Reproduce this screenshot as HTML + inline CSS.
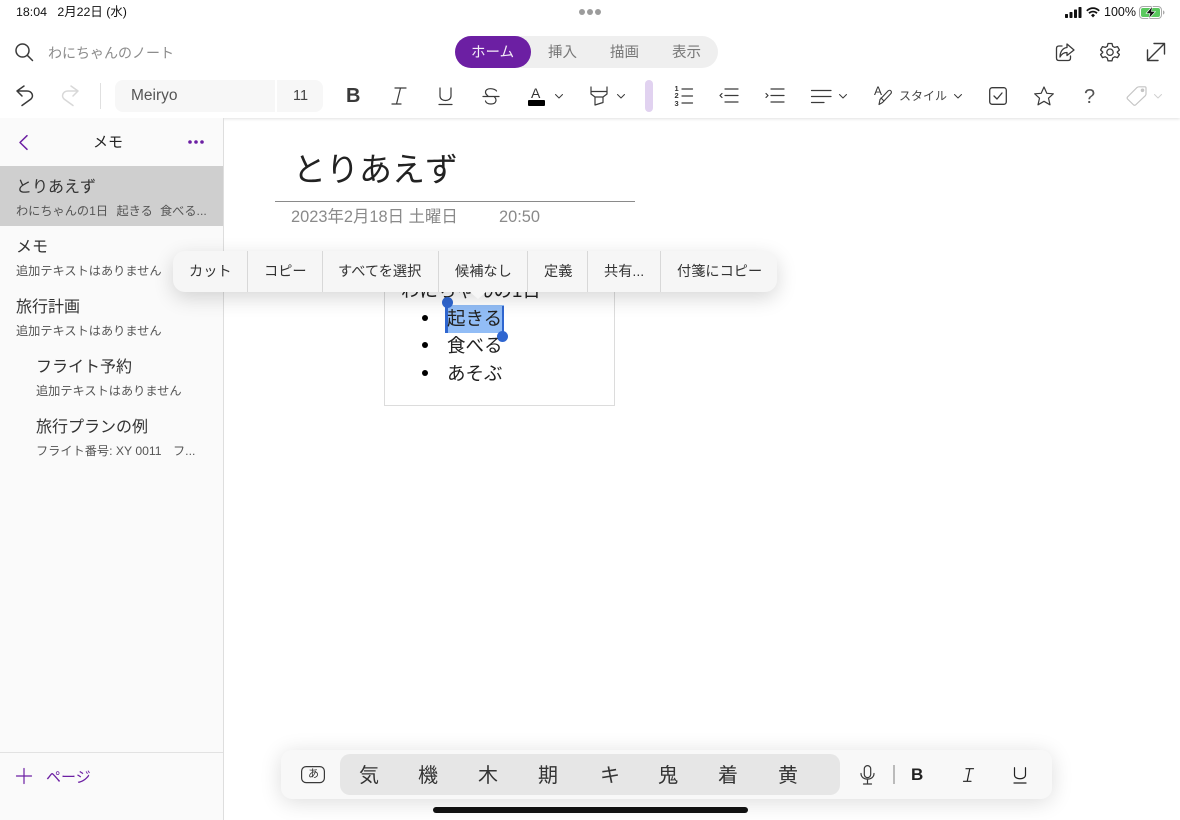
<!DOCTYPE html>
<html lang="ja"><head><meta charset="utf-8"><style>
*{box-sizing:border-box;margin:0;padding:0}
html,body{width:1180px;height:820px;overflow:hidden;background:#fff;font-family:"Liberation Sans","Noto Sans CJK JP",sans-serif;color:#222}
body{fill:none;stroke:#3a3a3a;stroke-width:1.5;stroke-linecap:round;stroke-linejoin:round}
.t{position:absolute;white-space:nowrap;line-height:1}
svg{position:absolute;overflow:visible}
#top{position:absolute;left:0;top:0;width:1180px;height:118px;background:#fff;box-shadow:0 1px 3px rgba(0,0,0,.12)}
#side{position:absolute;left:0;top:118px;width:224px;height:702px;background:#fafafa;border-right:1px solid #dedede}
.sel{position:absolute;left:0;top:48px;width:223px;height:60px;background:#cfcfcf}
.h{font-size:16px;color:#333}.s{font-size:12.2px;color:#555}
#menu{position:absolute;left:173px;top:251px;width:604px;height:41px;background:#f6f6f6;border-radius:12px;box-shadow:0 6px 20px rgba(0,0,0,.16);z-index:5}
#menu i{position:absolute;top:0;width:1px;height:41px;background:#d8d8d8}
#menu span{position:absolute;top:14px;font-size:14.2px;line-height:1;color:#333;white-space:nowrap}
#kb{position:absolute;left:281px;top:750px;width:771px;height:49px;background:#f8f8f8;border-radius:11px;box-shadow:0 3px 22px rgba(0,0,0,.14)}
#cand{position:absolute;left:59px;top:4px;width:500px;height:41px;background:#e6e6e6;border-radius:10px}
#kb .c{position:absolute;top:16px;font-size:20px;line-height:1;color:#333}
</style></head><body>
<div id="top"></div>
<div class="t" style="left:16px;top:6px;font-size:12.4px;color:#111">18:04&nbsp;&nbsp; 2月22日 (水)</div>
<div style="position:absolute;left:579px;top:9px;width:6px;height:6px;border-radius:3px;background:#9c9c9c"></div>
<div style="position:absolute;left:587px;top:9px;width:6px;height:6px;border-radius:3px;background:#9c9c9c"></div>
<div style="position:absolute;left:595px;top:9px;width:6px;height:6px;border-radius:3px;background:#9c9c9c"></div>
<svg style="left:1065px;top:7px" width="17" height="11"><g fill="#111" stroke="none"><rect x="0" y="7" width="3" height="4" rx=".7"/><rect x="4.500" y="5" width="3" height="6" rx=".7"/><rect x="9" y="2.500" width="3" height="8.500" rx=".7"/><rect x="13.500" y="0" width="3" height="11" rx=".7"/></g></svg>
<svg style="left:1086px;top:7px" width="14" height="11"><path d="M.8 3.800C4.500.2 9.500.2 13.200 3.800M3 6.200C5.300 4 8.700 4 11 6.200" stroke="#111" stroke-width="1.700" stroke-linecap="butt"/><path d="M5 8.300 7 6.800 9 8.300 7 10.500Z" fill="#111" stroke="none"/></svg>
<div class="t" style="left:1104px;top:6px;font-size:12.500px;color:#111">100%</div>
<svg style="left:1139px;top:6px" width="26" height="13"><rect x=".5" y=".5" width="22" height="12" rx="3.500" stroke="#aaa" stroke-width="1"/><rect x="2" y="2" width="19" height="9" rx="2" fill="#5ac85e" stroke="none"/><path d="M24 4.500v4c1-.3 1.500-1 1.500-2s-.5-1.700-1.500-2Z" fill="#aaa" stroke="none"/><path d="M13.500 0 7 7.500h4L9.500 13 16.500 5.500h-4L13.500 0Z" fill="#111" stroke="#fff" stroke-width=".6"/></svg>

<svg style="left:15px;top:43px" width="18" height="18" stroke-width="1.500"><circle cx="7.500" cy="7.500" r="6.500"/><path d="M12.300 12.300 17.500 17.500"/></svg>
<div class="t" style="left:48px;top:46px;font-size:14px;color:#8c8c8c">わにちゃんのノート</div>

<div style="position:absolute;left:455px;top:36px;width:263px;height:32px;border-radius:16px;background:#efefef"></div>
<div style="position:absolute;left:455px;top:36px;width:76px;height:32px;border-radius:16px;background:#6c1fa3"></div>
<div class="t" style="left:471px;top:46px;font-size:14.500px;color:#f4ecf8">ホーム</div>
<div class="t" style="left:548px;top:46px;font-size:14.500px;color:#777">挿入</div>
<div class="t" style="left:610px;top:46px;font-size:14.500px;color:#777">描画</div>
<div class="t" style="left:672px;top:46px;font-size:14.500px;color:#777">表示</div>

<svg style="left:1055px;top:43px" width="20" height="19" stroke-width="1.300"><path d="M7 3H4Q1.500 3 1.500 5.500V15Q1.500 17.500 4 17.500H13Q15.500 17.500 15.500 15V13"/><path d="M12 1 19 7 12 12.500V9.500C8.500 9.500 6.500 11 5 14 5 9 7.500 5 12 4.500Z"/></svg>
<svg style="left:1100px;top:42px" width="20" height="20" stroke-width="1.300"><path d="M8 1.500H12L12.700 4.300 14.700 5.400 17.500 4.600 19.400 8 17.300 10 17.300 10.500 19.400 12.500 17.500 15.600 14.700 14.800 12.700 16 12 18.800H8L7.300 16 5.300 14.800 2.500 15.600 .6 12.500 2.700 10.500V10L.6 8 2.500 4.600 5.300 5.400 7.300 4.300Z"/><circle cx="10" cy="10.200" r="3.200"/></svg>
<svg style="left:1146px;top:42px" width="20" height="20" stroke-width="1.400"><path d="M1.500 18.500 18.500 1.500M8 1.500H18.500V12M1.500 8V18.500H12"/></svg>

<svg style="left:15px;top:85px" width="20" height="21" stroke-width="1.500"><path d="M9 1 2 6 7 11M2 6H12C17 6 19 11 16 14L7 20.500"/></svg>
<svg style="left:60px;top:85px" width="20" height="21" stroke="#d8d8d8" stroke-width="1.500"><path d="M11 1 18 6 13 11M18 6H8C3 6 1 11 4 14L13 20.500"/></svg>
<div style="position:absolute;left:100px;top:83px;width:1px;height:26px;background:#e0e0e0"></div>
<div style="position:absolute;left:115px;top:80px;width:160px;height:32px;background:#f7f7f7;border-radius:8px 0 0 8px"></div>
<div style="position:absolute;left:277px;top:80px;width:46px;height:32px;background:#f7f7f7;border-radius:0 8px 8px 0"></div>
<div class="t" style="left:131px;top:88px;font-size:15.500px;color:#555">Meiryo</div>
<div class="t" style="left:293px;top:89px;font-size:14.500px;color:#444">11</div>
<div class="t" style="left:346px;top:86px;font-size:20px;font-weight:700;color:#3a3a3a">B</div>
<svg style="left:391px;top:87px" width="16" height="18" stroke-width="1.200"><path d="M4 1H15M1 17H10M9.500 1 5.500 17"/></svg>
<svg style="left:438px;top:87px" width="15" height="18" stroke-width="1.200"><path d="M2 1V9C2 15 13 15 13 9V1M1 17.500H14"/></svg>
<svg style="left:483px;top:87px" width="16" height="18" stroke-width="1.200"><path d="M13.500 4C12.500 1.500 3 0 2.500 5 2.300 7 4 8 5 9M0 9.500H16M11.500 10C14 12.500 13.500 17 8 17 5 17 3 16 2.500 14"/></svg>
<div class="t" style="left:531px;top:86px;font-size:14px;color:#333">A</div>
<div style="position:absolute;left:528px;top:100px;width:17px;height:6px;background:#000;border-radius:1px"></div>
<svg style="left:555px;top:94px" width="8" height="5" stroke-width="1"><path d="M.5.500 4 4 7.500.500"/></svg>
<svg style="left:590px;top:86px" width="18" height="20" stroke-width="1.200"><path d="M1 1V8L5 11H13L17 8V1M1 5.500H17M5 11V19L13 16.500V11"/></svg>
<svg style="left:617px;top:94px" width="8" height="5" stroke-width="1"><path d="M.5.500 4 4 7.500.500"/></svg>
<div style="position:absolute;left:645px;top:80px;width:8px;height:32px;border-radius:4px;background:#e1d2f0"></div>
<svg style="left:674px;top:86px" width="19" height="20" stroke-width="1.200"><path d="M8 3H18.500M8 10H18.500M8 17H18.500"/></svg>
<div class="t" style="left:674.500px;top:85px;font-size:7.500px;font-weight:700;color:#333;line-height:7.300px;width:6px">1<br>2<br>3</div>
<svg style="left:719px;top:87px" width="20" height="17" stroke-width="1.200"><path d="M6 2H19M6 8.500H19M6 15H19M3 6.500 1 8.500 3 10.500"/></svg>
<svg style="left:765px;top:87px" width="20" height="17" stroke-width="1.200"><path d="M6 2H19M6 8.500H19M6 15H19M1 6.500 3 8.500 1 10.500"/></svg>
<svg style="left:811px;top:89px" width="20" height="15" stroke-width="1.200"><path d="M.5 1.500H20M.5 7.500H20M.5 13.500H13"/></svg>
<svg style="left:839px;top:94px" width="8" height="5" stroke-width="1"><path d="M.5.500 4 4 7.500.500"/></svg>
<div class="t" style="left:874px;top:85px;font-size:12px;color:#333">A</div>
<svg style="left:877px;top:89px" width="15" height="17" stroke-width="1.100"><path d="M2 15.500 3 10.500 11 2Q13 .5 14 2T13.500 5L5.500 13.500ZM4 9 7 12"/></svg>
<div class="t" style="left:899px;top:90px;font-size:12px;color:#444">スタイル</div>
<svg style="left:954px;top:94px" width="8" height="5" stroke-width="1"><path d="M.5.500 4 4 7.500.500"/></svg>
<svg style="left:989px;top:87px" width="18" height="18" stroke-width="1.300"><rect x=".7" y=".7" width="16.600" height="16.600" rx="2.500"/><path d="M5 9 8 12 13 6"/></svg>
<svg style="left:1034px;top:86px" width="20" height="20" stroke-width="1.200"><path d="M10 1 12.800 7.300 19.300 7.800 14.500 12.200 16 18.800 10 15.300 4 18.800 5.500 12.200.7 7.800 7.200 7.300Z"/></svg>
<div class="t" style="left:1084px;top:87px;font-size:20px;color:#555">?</div>
<svg style="left:1126px;top:86px" width="21" height="20" stroke="#c4c4c4" stroke-width="1.200"><path d="M1.500 11 11 1.500Q12 .8 13 .8H19Q20 .8 20 2V8Q20 9 19.200 9.800L9.500 19Q8.500 19.500 7.700 19L1.500 13Q.8 12 1.500 11Z"/><circle cx="16.500" cy="4.300" r="1.200" fill="#c4c4c4"/></svg>
<svg style="left:1154px;top:94px" width="8" height="5" stroke="#d0d0d0" stroke-width="1"><path d="M.5.500 4 4 7.500.500"/></svg>

<div id="side">
<svg style="left:19px;top:17px" width="9" height="15" stroke="#6c1fa3" stroke-width="1.500"><path d="M8 .7 1 7.500 8 14.300"/></svg>
<div class="t" style="left:93px;top:17px;font-size:15px;color:#222">メモ</div>
<svg style="left:188px;top:22px" width="16" height="4"><g fill="#6c1fa3" stroke="none"><circle cx="2" cy="2" r="1.800"/><circle cx="8" cy="2" r="1.800"/><circle cx="14" cy="2" r="1.800"/></g></svg>
<div class="sel"></div>
<div class="t h" style="left:16px;top:61.500px">とりあえず</div>
<div class="t s" style="left:16px;top:87px">わにちゃんの1日</div>
<div class="t s" style="left:116.500px;top:87px">起きる</div>
<div class="t s" style="left:160px;top:87px">食べる...</div>
<div class="t h" style="left:16px;top:121.500px">メモ</div>
<div class="t s" style="left:16px;top:147px">追加テキストはありません</div>
<div class="t h" style="left:16px;top:181.500px">旅行計画</div>
<div class="t s" style="left:16px;top:207px">追加テキストはありません</div>
<div class="t h" style="left:36px;top:241.500px">フライト予約</div>
<div class="t s" style="left:36px;top:267px">追加テキストはありません</div>
<div class="t h" style="left:36px;top:301.500px">旅行プランの例</div>
<div class="t s" style="left:36px;top:327px">フライト番号: XY 0011</div>
<div class="t s" style="left:173px;top:327px">フ...</div>
<div style="position:absolute;left:0;top:634px;width:223px;height:1px;background:#e2e2e2"></div>
<svg style="left:16px;top:650px" width="16" height="16" stroke="#6c1fa3" stroke-width="1.200"><path d="M8 .5V15.500M.5 8H15.500"/></svg>
<div class="t" style="left:46px;top:652px;font-size:15px;color:#6c1fa3">ページ</div>
</div>

<div class="t" style="left:293px;top:152.500px;font-size:33px;color:#222;letter-spacing:0">とりあえず</div>
<div style="position:absolute;left:275px;top:201px;width:360px;height:1px;background:#8a8a8a"></div>
<div class="t" style="left:291px;top:209px;font-size:16.400px;color:#8a8a8a">2023年2月18日 土曜日</div>
<div class="t" style="left:499px;top:209px;font-size:16.400px;color:#8a8a8a">20:50</div>

<div style="position:absolute;left:384px;top:280px;width:231px;height:126px;border:1px solid #dcdcdc;border-top:0"></div>
<div class="t" style="left:401px;top:282px;font-size:18.500px;color:#222">わにちゃんの1日</div>
<div style="position:absolute;left:446px;top:305px;width:58px;height:28px;background:#92bdf6"></div>
<div style="position:absolute;left:445px;top:304px;width:2.500px;height:29px;background:#2f66d0"></div>
<div style="position:absolute;left:502px;top:306px;width:2px;height:28px;background:#2f66d0"></div>
<div style="position:absolute;left:441.500px;top:296.500px;width:11px;height:11px;border-radius:50%;background:#2f66d0"></div>
<div style="position:absolute;left:497px;top:331px;width:11px;height:11px;border-radius:50%;background:#2f66d0"></div>
<div class="t" style="left:447px;top:310px;font-size:18.500px;color:#222">起きる</div>
<div class="t" style="left:447px;top:337px;font-size:18.500px;color:#222">食べる</div>
<div class="t" style="left:447px;top:365px;font-size:18.500px;color:#222">あそぶ</div>
<div style="position:absolute;left:421.500px;top:314.500px;width:6px;height:6px;border-radius:50%;background:#000"></div>
<div style="position:absolute;left:421.500px;top:342px;width:6px;height:6px;border-radius:50%;background:#000"></div>
<div style="position:absolute;left:421.500px;top:369.500px;width:6px;height:6px;border-radius:50%;background:#000"></div>

<div id="menu">
<span style="left:16px">カット</span><i style="left:74px"></i>
<span style="left:91px">コピー</span><i style="left:149px"></i>
<span style="left:165px">すべてを選択</span><i style="left:265px"></i>
<span style="left:282px">候補なし</span><i style="left:354px"></i>
<span style="left:371px">定義</span><i style="left:414px"></i>
<span style="left:431px">共有...</span><i style="left:487px"></i>
<span style="left:504px">付箋にコピー</span>
<div style="position:absolute;left:297px;top:41px;width:0;height:0;border:8px solid transparent;border-top:7px solid #f6f6f6;border-bottom:0"></div>
</div>

<div id="kb">
<svg style="left:20px;top:16px" width="24" height="18" stroke-width="1.200"><rect x=".6" y=".6" width="22.800" height="16" rx="4.500"/></svg>
<div class="t" style="left:27px;top:19px;font-size:11px;color:#333">あ</div>
<div id="cand"></div>
<span class="c" style="left:78px">気</span>
<span class="c" style="left:137px">機</span>
<span class="c" style="left:197px">木</span>
<span class="c" style="left:257px">期</span>
<span class="c" style="left:319px">キ</span>
<span class="c" style="left:377px">鬼</span>
<span class="c" style="left:437px">着</span>
<span class="c" style="left:497px">黄</span>
<svg style="left:579px;top:15px" width="15" height="20" stroke-width="1.200"><rect x="4.300" y=".6" width="6.400" height="12" rx="3.200"/><path d="M1 8.500C1 16 14 16 14 8.500M7.500 14.500V18.500M3.500 19H11.500"/></svg>
<div style="position:absolute;left:612px;top:15px;width:1.500px;height:19px;background:#bbb"></div>
<div class="t" style="left:630px;top:16px;font-size:17px;font-weight:700;color:#222">B</div>
<svg style="left:682px;top:18px" width="11" height="14" stroke-width="1.200" stroke="#222"><path d="M3 .7H10.500M.5 13.300H8M6.800 .7 4.200 13.300"/></svg>
<svg style="left:732px;top:17px" width="14" height="17" stroke-width="1.200" stroke="#222"><path d="M1.500 .7V8C1.500 13 12.500 13 12.500 8V.7M1 16H13"/></svg>
</div>
<div style="position:absolute;left:433px;top:807px;width:315px;height:6px;border-radius:3px;background:#111"></div>
</body></html>
